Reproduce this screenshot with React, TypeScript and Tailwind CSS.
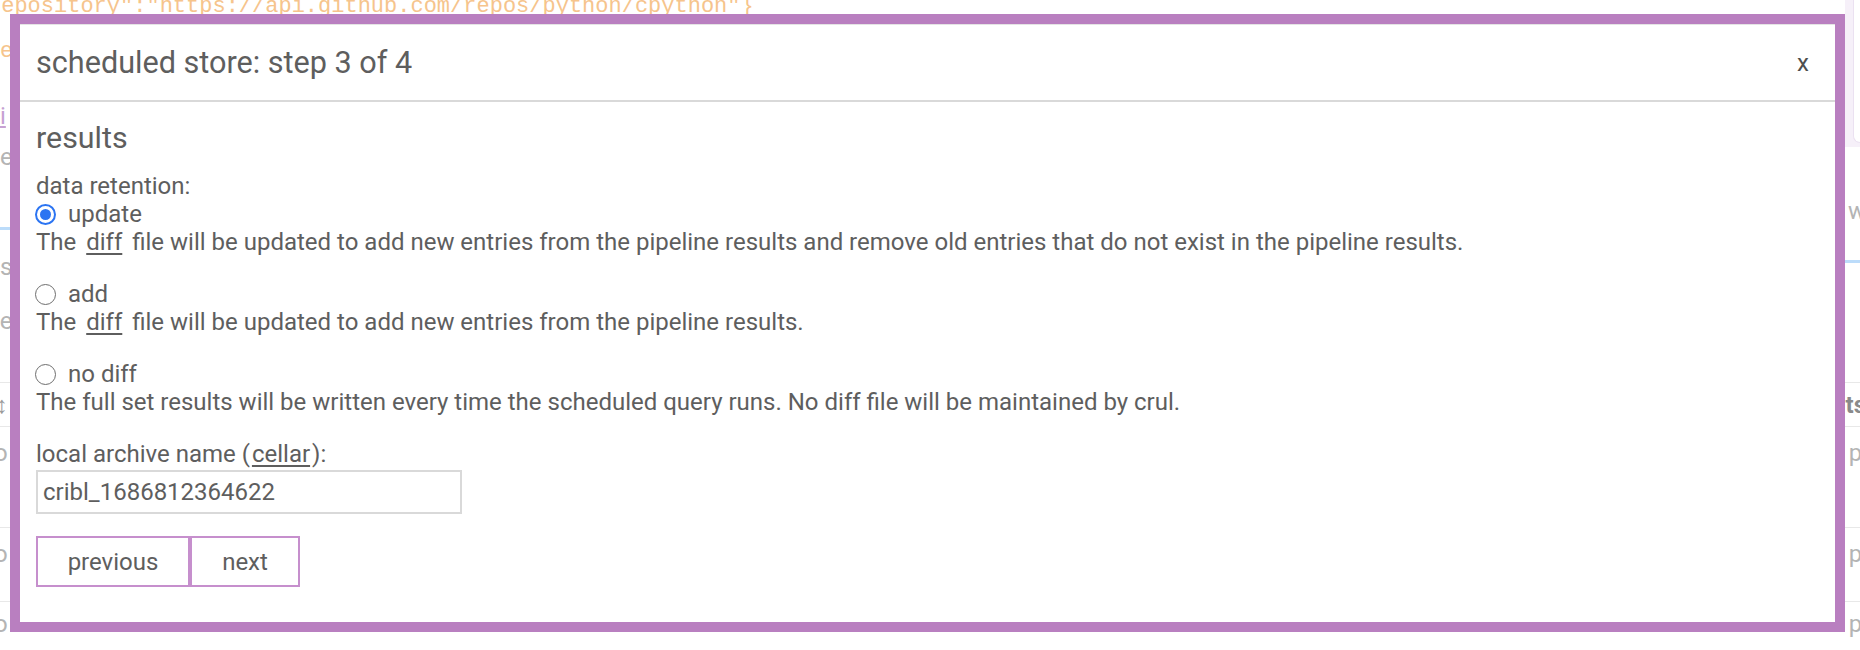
import React from "react";

function Radio({ checked }: { checked?: boolean }) {
  if (checked) {
    return (
      <span className="-ml-px flex h-[21px] w-[21px] shrink-0 items-center justify-center rounded-full border-2 border-[#2b74f2] bg-white">
        <span className="h-[11px] w-[11px] rounded-full bg-[#2b74f2]" />
      </span>
    );
  }
  return <span className="-ml-px h-[21px] w-[21px] shrink-0 rounded-full border-[1.5px] border-[#6e6e6e] bg-white" />;
}

function Diff() {
  return <span className="mx-[4px] underline underline-offset-[3px]">diff</span>;
}

function Option({
  label,
  checked,
  className = "",
  children,
}: {
  label: string;
  checked?: boolean;
  className?: string;
  children: React.ReactNode;
}) {
  return (
    <div className={className}>
      <label className="flex items-center gap-[12px]">
        <Radio checked={checked} />
        <span>{label}</span>
      </label>
      <p>{children}</p>
    </div>
  );
}

// faded page that sits behind the dialog
function Backdrop() {
  return (
    <div className="flex h-full flex-col text-[24px] leading-[28px] text-[#b4b4b4]">
      <div className="flex h-[147px]">
        <div className="flex flex-1 flex-col">
          <div className="-ml-[12px] -mt-[4px] h-[22px] font-['Liberation_Mono',monospace] text-[22px] leading-[22px] text-[#f6c48c]">
            repository":"https://api.github.com/repos/python/cpython"{"}"}
          </div>
          <div className="mt-[22px] font-['Liberation_Mono',monospace] text-[22px] leading-[24px] text-[#f6c48c]">e</div>
          <div className="mt-[38px] text-[#c6a1d3] underline">i</div>
        </div>
        <div className="w-[15px] bg-[#f6f0f9] pb-[4px] pl-[8px]">
          <div className="h-full rounded-bl-[8px] border-b border-l border-[#ebe1f1] bg-white" />
        </div>
      </div>
      <div className="flex h-[236px] flex-col border-b border-[#e8e8e8]">
        <div className="flex h-[48px] items-start justify-between">
          <span className="-mt-[4px]">e</span>
          <span className="-mr-[6px] mt-[50px]">w</span>
        </div>
        <div className="mt-[32px] h-[3px] w-[10px] bg-[#bcdcfa]" />
        <div className="mt-[30px] flex justify-end">
          <div className="h-[3px] w-[15px] bg-[#bcdcfa]" />
        </div>
        <div className="-mt-[10px]">s</div>
        <div className="-ml-[8px] mt-[26px]">te</div>
      </div>
      <div className="flex h-[44px] items-center justify-between border-b border-[#e8e8e8] text-[#9a9a9a]">
        <span className="-ml-[4px]">↕</span>
        <span className="-mr-[6px] font-bold text-[#8a8a8a]">ts</span>
      </div>
      <div className="flex h-[101px] items-start justify-between border-b border-[#e8e8e8] pt-[12px]">
        <span className="-ml-[6px]">o</span>
        <span className="-mr-[8px]">pi</span>
      </div>
      <div className="flex h-[74px] items-start justify-between border-b border-[#e8e8e8] pt-[12px]">
        <span className="-ml-[6px]">o</span>
        <span className="-mr-[8px]">pi</span>
      </div>
      <div className="flex flex-1 items-start justify-between pt-[8px]">
        <span className="-ml-[6px]">o</span>
        <span className="-mr-[8px]">pi</span>
      </div>
    </div>
  );
}

export default function App() {
  return (
    <div className="relative h-[650px] w-[1860px] overflow-hidden bg-white font-['Roboto',sans-serif]">
      <Backdrop />

      <div className="absolute left-[10px] top-[14px] flex h-[618px] w-[1835px] flex-col border-[10px] border-[#b97fc0] bg-white text-[24px] leading-[28px] text-[#5e5e5e]">
        <header className="flex h-[78px] shrink-0 items-center justify-between border-t border-b-2 border-t-[#e4e4e4] border-b-[#d9d9d9] pl-[16px] pr-[26px]">
          <h1 className="text-[30.6px] leading-[35px]">scheduled store: step 3 of 4</h1>
          <button className="text-[24px] text-[#4e4e4e]">x</button>
        </header>

        <div className="flex flex-1 flex-col px-[16px] pt-[18px]">
          <h2 className="text-[30.4px] leading-[35px]">results</h2>

          <div className="mt-[17px]">data retention:</div>
          <Option label="update" checked>
            The <Diff /> file will be updated to add new entries from the pipeline results and remove old entries that do
            not exist in the pipeline results.
          </Option>
          <Option label="add" className="mt-[24px]">
            The <Diff /> file will be updated to add new entries from the pipeline results.
          </Option>
          <Option label="no diff" className="mt-[24px]">
            The full set results will be written every time the scheduled query runs. No diff file will be maintained by
            crul.
          </Option>

          <div className="mt-[24px]">
            local archive name (<span className="mx-[2px] underline underline-offset-[3px]">cellar</span>):
          </div>
          <input
            readOnly
            defaultValue="cribl_1686812364622"
            className="mt-[2px] h-[44px] w-[426px] border-2 border-[#d9d9d9] px-[5px] text-[#5e5e5e] outline-none"
          />

          <div className="mt-[22px] flex">
            <button className="h-[51px] w-[154px] border-2 border-[#c68fcd]">previous</button>
            <button className="h-[51px] w-[110px] border-2 border-[#c68fcd]">next</button>
          </div>
        </div>
      </div>
    </div>
  );
}
